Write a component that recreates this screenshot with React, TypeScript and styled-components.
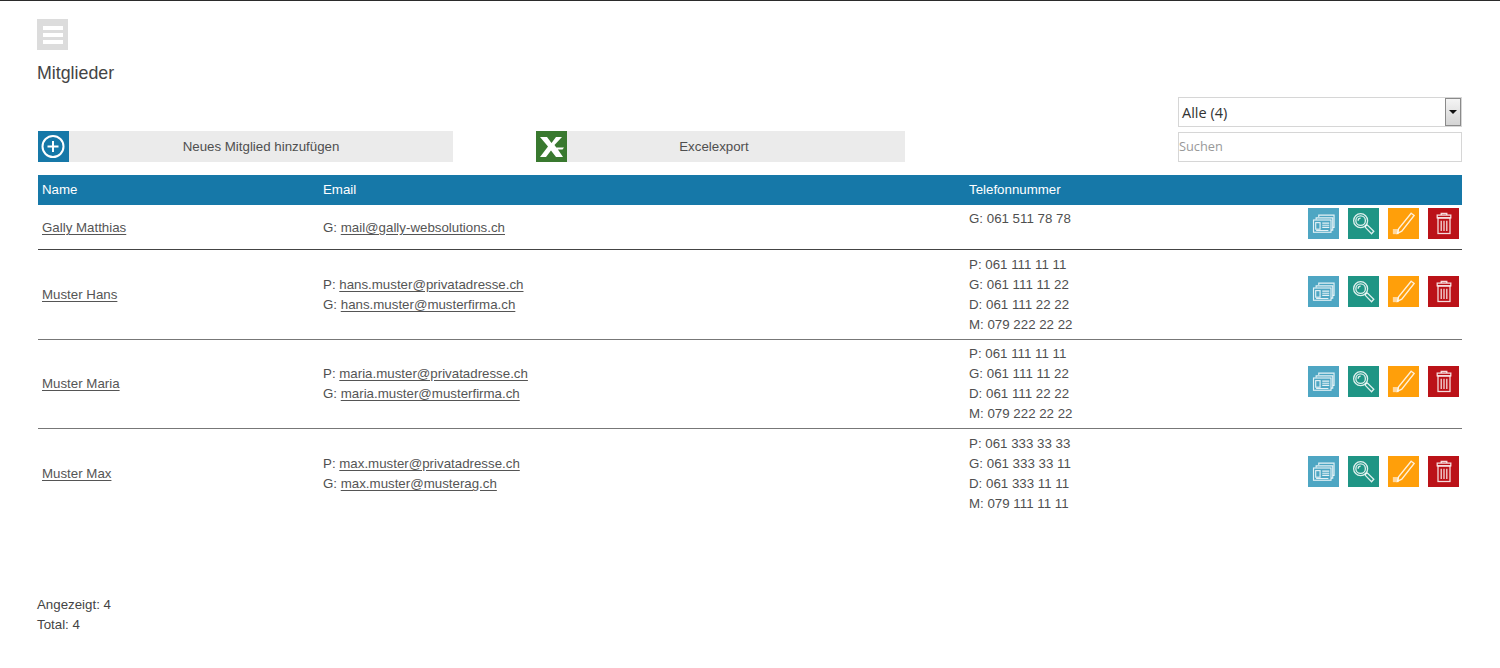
import React from "react";
import styled, { createGlobalStyle } from "styled-components";

const Global = createGlobalStyle`
  html, body { margin: 0; padding: 0; background: #fff; }
  body { font-family: "Liberation Sans", Arial, sans-serif; font-size: 13.3px; color: #4f4f4f; }
`;

const Page = styled.div`
  height: 668px;
  box-sizing: border-box;
  border-top: 1px solid #2b2b2b;
  padding: 18px 38px 0 37px;
  overflow: hidden;
`;
const MenuButton = styled.div`
  width: 31px;
  height: 31px;
  background: #dcdcdc;
  display: flex;
  flex-direction: column;
  justify-content: center;
  gap: 3px;
  align-items: center;
`;
const MenuBar = styled.span`
  width: 20px;
  height: 4px;
  background: #fff;
`;
const Title = styled.h1`
  margin: 13px 0 0;
  font-size: 17.8px;
  line-height: 21px;
  font-weight: 400;
  color: #444;
`;
const Toolbar = styled.div`
  display: flex;
  justify-content: space-between;
  align-items: flex-end;
  margin-top: 13px;
  margin-left: 1px;
`;
const Actions = styled.div`
  display: flex;
  gap: 83px;
`;
const Action = styled.div<{ $width: number }>`
  width: ${(p) => p.$width}px;
  height: 31px;
  display: flex;
  background: #ebebeb;
`;
const ActionIcon = styled.div<{ $bg: string }>`
  width: 31px;
  height: 31px;
  flex: none;
  background: ${(p) => p.$bg};
  display: flex;
  align-items: center;
  justify-content: center;
`;
const ActionLabel = styled.div<{ $shift?: number }>`
  flex: 1;
  text-align: center;
  line-height: 31px;
  color: #4f4f4f;
  padding-right: ${(p) => p.$shift ?? 0}px;
`;
const Filters = styled.div`
  width: 284px;
  display: flex;
  flex-direction: column;
  gap: 5px;
`;
const SelectBox = styled.div`
  height: 30px;
  box-sizing: border-box;
  border: 1px solid #d6d6d6;
  display: flex;
  align-items: center;
  justify-content: space-between;
  padding: 0 0 0 3px;
  font-family: "Open Sans", sans-serif;
  font-size: 14.5px;
  color: #333;
`;
const SelectArrow = styled.span`
  width: 16px;
  height: 28px;
  box-sizing: border-box;
  border: 1px solid #8a8a8a;
  background: linear-gradient(#f4f4f4, #d4d4d4);
  display: flex;
  align-items: center;
  justify-content: center;
  &::before {
    content: "";
    border: 4px solid transparent;
    border-top: 4px solid #111;
    border-bottom: 0;
  }
`;
const SearchBox = styled.div`
  height: 30px;
  box-sizing: border-box;
  border: 1px solid #d6d6d6;
  line-height: 26px;
  padding-left: 0;
  font-family: "Open Sans", sans-serif;
  font-size: 12.8px;
  color: #999;
`;
const Table = styled.div`
  margin-top: 13px;
  margin-left: 1px;
`;
const Grid = styled.div`
  display: grid;
  grid-template-columns: 281px 646px 1fr 155px;
`;
const Head = styled(Grid)`
  height: 30px;
  background: #1678a8;
  color: #fff;
  line-height: 29px;
`;
const HeadCell = styled.div`
  padding-left: 4px;
`;
const Row = styled(Grid)<{ $last?: boolean; $dark?: boolean }>`
  box-sizing: border-box;
  border-bottom: ${(p) => (p.$last ? "none" : `1px solid ${p.$dark ? "#444" : "#777"}`)};
  min-height: ${(p) => (p.$dark ? "45px" : "89.5px")};
`;
const Cell = styled.div`
  padding: 1px 0 0 4px;
  display: flex;
  flex-direction: column;
  justify-content: center;
`;
const TopCell = styled(Cell)`
  justify-content: flex-start;
  padding-top: 4px;
`;
const Line = styled.div`
  line-height: 20px;
  height: 20px;
  white-space: nowrap;
`;
const PersonLink = styled.a`
  color: #555;
  text-decoration: underline;
  text-underline-offset: 2px;
`;
const Buttons = styled.div`
  display: flex;
  justify-content: flex-end;
  gap: 9px;
  padding: 3px 3px 0 0;
  align-items: flex-start;
`;
const CenterButtons = styled(Buttons)`
  padding: 0 3px 5px 0;
  align-items: center;
`;
const IconButton = styled.div<{ $bg: string }>`
  width: 31px;
  height: 31px;
  background: ${(p) => p.$bg};
  display: flex;
  align-items: center;
  justify-content: center;
`;
const Footer = styled.div`
  margin-top: 76.6px;
  line-height: 20px;
  color: #444;
`;

const stroke = { fill: "none", stroke: "#fff", strokeWidth: 1.3, strokeOpacity: 0.85 } as const;

const CardIcon = () => (
  <svg width="26" height="21" viewBox="0 0 28 24" {...stroke}>
    <path d="M8 4.5V2.5h17.5v14H24" />
    <path d="M5 7.5V5.5h19v14h-2" />
    <rect x="2" y="8" width="20" height="14" />
    <rect x="4.5" y="11" width="5" height="7.5" />
    <path d="M12 11.5h8M12 14h8M12 16.5h8M5 20h14" />
  </svg>
);
const SearchIcon = () => (
  <svg width="23" height="23" viewBox="0 0 28 27" {...stroke} strokeWidth="1.6">
    <circle cx="10.5" cy="10" r="8.5" />
    <circle cx="10.5" cy="10" r="5.8" />
    <path d="M7.5 10a3 3 0 0 1 3-3" />
    <path d="M16.5 16.5l2.2-1 7.8 7.5-2.7 3-7.6-7.8z" />
  </svg>
);
const PenIcon = () => (
  <svg width="23" height="23" viewBox="0 0 27 27">
    <path d="M22.5 1.5l3.5 2.5L11.5 22.5l-5 2.5 1.2-5.2z" {...stroke} strokeWidth="1.6" />
    <path d="M1 20h7v6H1z" fill="#fff" fillOpacity="0.6" />
  </svg>
);
const TrashIcon = () => (
  <svg width="16" height="23" viewBox="0 0 20 27" {...stroke} strokeWidth="1.6">
    <path d="M6.5 3V1h7v2" />
    <rect x="1.5" y="3" width="17" height="3.5" />
    <rect x="2.5" y="6.5" width="15" height="19.5" />
    <path d="M6.5 10v13M10 10v13M13.5 10v13" />
  </svg>
);
const PlusIcon = () => (
  <svg width="25" height="25" viewBox="0 0 25 25" fill="none" stroke="#fff" strokeWidth="2">
    <circle cx="12" cy="12.5" r="10.5" />
    <path d="M12 7v11M6.5 12.5h11" />
  </svg>
);
const ExcelIcon = () => (
  <svg width="25" height="20" viewBox="0 0 25 20" fill="#fff">
    <path d="M1 0h7l4.5 6L17 0h6l-7.5 8 1.8 2.5H25l-1.5 2h-4.6L24 20h-7l-5-6.5L7 20H1l8-10.5z" />
  </svg>
);

const RowButtons = ({ center }: { center?: boolean }) => {
  const Wrap = center ? CenterButtons : Buttons;
  return (
    <Wrap>
      <IconButton $bg="#4ea6c3"><CardIcon /></IconButton>
      <IconButton $bg="#1f9585"><SearchIcon /></IconButton>
      <IconButton $bg="#ff9f0a"><PenIcon /></IconButton>
      <IconButton $bg="#bb1218"><TrashIcon /></IconButton>
    </Wrap>
  );
};

type Member = {
  name: string;
  emails: [string, string][];
  phones: [string, string][];
};

const members: Member[] = [
  {
    name: "Muster Hans",
    emails: [["P", "hans.muster@privatadresse.ch"], ["G", "hans.muster@musterfirma.ch"]],
    phones: [["P", "061 111 11 11"], ["G", "061 111 11 22"], ["D", "061 111 22 22"], ["M", "079 222 22 22"]],
  },
  {
    name: "Muster Maria",
    emails: [["P", "maria.muster@privatadresse.ch"], ["G", "maria.muster@musterfirma.ch"]],
    phones: [["P", "061 111 11 11"], ["G", "061 111 11 22"], ["D", "061 111 22 22"], ["M", "079 222 22 22"]],
  },
  {
    name: "Muster Max",
    emails: [["P", "max.muster@privatadresse.ch"], ["G", "max.muster@musterag.ch"]],
    phones: [["P", "061 333 33 33"], ["G", "061 333 33 11"], ["D", "061 333 11 11"], ["M", "079 111 11 11"]],
  },
];

export default function App() {
  return (
    <Page>
      <Global />
      <MenuButton><MenuBar /><MenuBar /><MenuBar /></MenuButton>
      <Title>Mitglieder</Title>
      <Toolbar>
        <Actions>
          <Action $width={415}>
            <ActionIcon $bg="#1678a8"><PlusIcon /></ActionIcon>
            <ActionLabel>Neues Mitglied hinzufügen</ActionLabel>
          </Action>
          <Action $width={369}>
            <ActionIcon $bg="#39792f"><ExcelIcon /></ActionIcon>
            <ActionLabel $shift={44}>Excelexport</ActionLabel>
          </Action>
        </Actions>
        <Filters>
          <SelectBox>Alle (4)<SelectArrow /></SelectBox>
          <SearchBox>Suchen</SearchBox>
        </Filters>
      </Toolbar>
      <Table>
        <Head>
          <HeadCell>Name</HeadCell>
          <HeadCell>Email</HeadCell>
          <HeadCell>Telefonnummer</HeadCell>
          <HeadCell />
        </Head>
        <Row $dark>
          <Cell><PersonLink>Gally Matthias</PersonLink></Cell>
          <Cell><Line>G: <PersonLink>mail@gally-websolutions.ch</PersonLink></Line></Cell>
          <TopCell><Line>G: 061 511 78 78</Line></TopCell>
          <RowButtons />
        </Row>
        {members.map((m, i) => (
          <Row key={m.name} $last={i === members.length - 1}>
            <Cell><Line><PersonLink>{m.name}</PersonLink></Line></Cell>
            <Cell>
              {m.emails.map(([k, v]) => (
                <Line key={v}>{k}: <PersonLink>{v}</PersonLink></Line>
              ))}
            </Cell>
            <Cell>
              {m.phones.map(([k, v]) => (
                <Line key={k}>{k}: {v}</Line>
              ))}
            </Cell>
            <RowButtons center />
          </Row>
        ))}
      </Table>
      <Footer>
        <div>Angezeigt: 4</div>
        <div>Total: 4</div>
      </Footer>
    </Page>
  );
}
